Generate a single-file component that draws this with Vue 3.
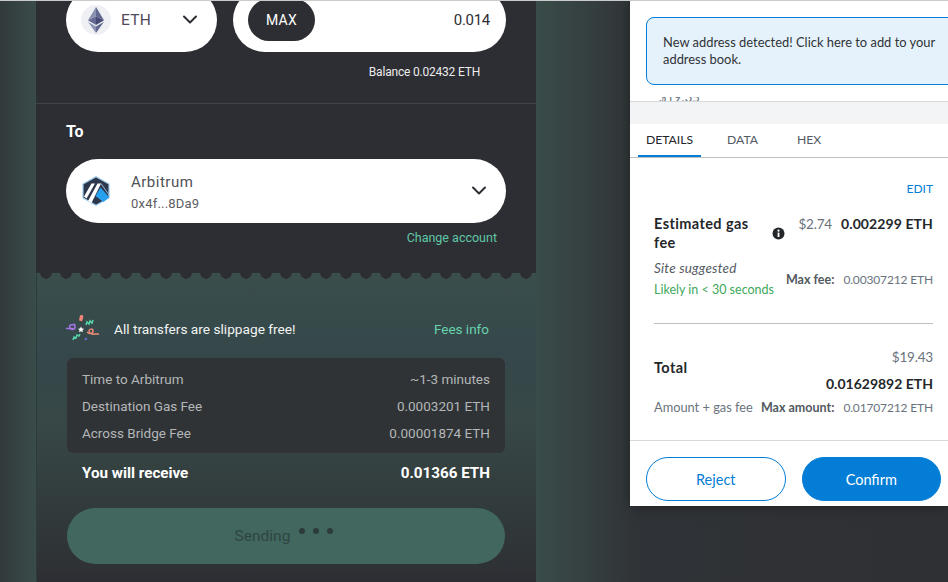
<template>
  <div class="page">
    <div class="card">
      <section class="from">
        <div class="pills">
          <div class="pill token">
            <span class="eth-badge">
              <svg width="16" height="26" viewBox="0 0 16 26">
                <path d="M8 0 L8 9.6 L0 13.2 Z" fill="#8a92b2" />
                <path d="M8 0 L16 13.2 L8 9.6 Z" fill="#62688f" />
                <path d="M0 13.2 L8 9.6 L8 18 Z" fill="#62688f" />
                <path d="M16 13.2 L8 18 L8 9.6 Z" fill="#454a75" />
                <path d="M0 14.8 L8 26 L8 19.6 Z" fill="#8a92b2" />
                <path d="M16 14.8 L8 19.6 L8 26 Z" fill="#62688f" />
              </svg>
            </span>
            <span class="token-name">ETH</span>
            <svg class="chevron" width="16" height="10" viewBox="0 0 16 10">
              <path d="M2 1.5 L8 7.5 L14 1.5" fill="none" stroke="#2d2e33" stroke-width="2" stroke-linecap="round" stroke-linejoin="round" />
            </svg>
          </div>
          <div class="pill amount">
            <button class="max">MAX</button>
            <span class="amount-value">0.014</span>
          </div>
        </div>
        <div class="balance">Balance 0.02432 ETH</div>
      </section>

      <section class="to">
        <h3>To</h3>
        <div class="pill account">
          <svg class="arb" width="28" height="30" viewBox="0 0 28 30">
            <path d="M14 .7 L27 8 L27 22 L14 29.3 L1 22 L1 8 Z" fill="#2d374b" stroke="#9dcced" stroke-width="1.2" />
            <path d="M18.5 11.5 L27 21 L21.5 26 L13.5 20 Z" fill="#28a0f0" />
            <path d="M19 7.5 L27 19" fill="none" stroke="#96bedc" stroke-width="1" />
            <path d="M2 20.5 L9.5 7.5 L13 7.5 L4.5 22.5 Z" fill="#fff" />
            <path d="M6 25 L15.5 7.5 L19 7.5 L9.5 27 Z" fill="#fff" />
          </svg>
          <div class="account-text">
            <div class="account-name">Arbitrum</div>
            <div class="account-addr">0x4f...8Da9</div>
          </div>
          <svg class="chevron" width="16" height="10" viewBox="0 0 16 10">
            <path d="M2 1.5 L8 7.5 L14 1.5" fill="none" stroke="#2d2e33" stroke-width="2" stroke-linecap="round" stroke-linejoin="round" />
          </svg>
        </div>
        <div class="change">Change account</div>
      </section>

      <section class="summary">
        <div class="banner">
          <svg width="36" height="30" viewBox="0 0 36 30">
            <rect x="14.5" y="1" width="3.5" height="6" rx="1" fill="#f0857a" transform="rotate(12 16 4)" />
            <path d="M21 11 l1-3 2 2 1-3 2 2 1-3" fill="none" stroke="#55d6a8" stroke-width="1.5" />
            <path d="M1 14.5 h7 M8 11 c-3-1-4 1-3 3 s5 2 5-1 -1-3-2-2" fill="none" stroke="#a675e8" stroke-width="1.6" />
            <path d="M16 12.5 l1 2 2 .3-1.5 1.4 .4 2.1-1.9-1-1.9 1 .4-2.1-1.5-1.4 2-.3 Z" fill="#fff" />
            <path d="M22 18 c2 2 6 2 6-1 s-4-2-4 0 3 4 6 3 h4" fill="none" stroke="#ee8a76" stroke-width="1.5" />
            <path d="M8 26 l1-3 2 1 1-3 2 1 1-2" fill="none" stroke="#55d6a8" stroke-width="1.5" />
            <path d="M19 26 l2-3 1.5 3 Z" fill="#6d62d8" />
          </svg>
          <span class="banner-text">All transfers are slippage free!</span>
          <span class="fees-link">Fees info</span>
        </div>

        <div class="fees">
          <div class="fee-row" v-for="fee in fees" :key="fee.label">
            <span>{{ fee.label }}</span>
            <span>{{ fee.value }}</span>
          </div>
        </div>

        <div class="receive">
          <span>You will receive</span>
          <span>0.01366 ETH</span>
        </div>

        <button class="sending">
          <span>Sending</span>
          <span class="dots"><i></i><i></i><i></i></span>
        </button>
      </section>
    </div>

    <aside class="popup">
      <div class="alert">New address detected! Click here to add to your address book.</div>
      <div class="peek"><span>$19.35</span></div>
      <div class="stripe"></div>
      <nav class="tabs">
        <span class="tab active">DETAILS</span>
        <span class="tab data">DATA</span>
        <span class="tab hex">HEX</span>
      </nav>

      <div class="details">
        <div class="edit">EDIT</div>
        <div class="gas-row">
          <div class="label">Estimated gas fee</div>
          <svg class="info" width="13" height="13" viewBox="0 0 13 13">
            <circle cx="6.5" cy="6.5" r="6" fill="#24272a" />
            <rect x="5.6" y="5.6" width="1.8" height="4.4" fill="#fff" />
            <circle cx="6.5" cy="3.7" r="1.1" fill="#fff" />
          </svg>
          <div class="gas-values">
            <span class="muted">$2.74</span>
            <strong>0.002299 ETH</strong>
          </div>
        </div>
        <div class="site-row">
          <div>
            <div class="site">Site suggested</div>
            <div class="likely">Likely in &lt; 30 seconds</div>
          </div>
          <div class="small">
            <b>Max fee:</b>
            <span>0.00307212 ETH</span>
          </div>
        </div>
        <hr />
        <div class="total-row">
          <div class="label total-label">Total</div>
          <div class="total-values">
            <div class="muted">$19.43</div>
            <strong>0.01629892 ETH</strong>
          </div>
        </div>
        <div class="amount-row">
          <span class="muted-sm">Amount + gas fee</span>
          <div class="small">
            <b>Max amount:</b>
            <span>0.01707212 ETH</span>
          </div>
        </div>
      </div>

      <footer class="actions">
        <button class="reject">Reject</button>
        <button class="confirm">Confirm</button>
      </footer>
    </aside>
  </div>
</template>

<script setup>
const fees = [
  { label: 'Time to Arbitrum', value: '~1-3 minutes' },
  { label: 'Destination Gas Fee', value: '0.0003201 ETH' },
  { label: 'Across Bridge Fee', value: '0.00001874 ETH' }
]
</script>

<style>
html,
body {
  margin: 0;
  background: #2d2e33;
}
</style>

<style scoped>
.page {
  position: relative;
  width: 948px;
  height: 582px;
  overflow: hidden;
  box-sizing: border-box;
  padding-left: 36px;
  font-family: "Roboto", "Liberation Sans", sans-serif;
  background: linear-gradient(90deg, #323a3b 0, #394c49 36px, #394c49 536px, #353f3f 590px, #2f3236 640px, #2e3034 100%);
}

.page::after {
  content: "";
  position: absolute;
  left: 0;
  right: 0;
  top: 0;
  height: 1px;
  background: #c9cbcc;
}

.card {
  display: flow-root;
  width: 500px;
  height: 582px;
  background: #2d2e33;
}

.from {
  height: 115px;
  margin-top: -12px;
  padding: 0 30px;
  border-bottom: 1px solid #3f4446;
}

.pills {
  display: flex;
  gap: 16px;
}

.pill {
  display: flex;
  align-items: center;
  height: 64px;
  background: #fff;
  border-radius: 32px;
  box-sizing: border-box;
  color: #2d2e33;
}

.token {
  width: 151px;
  padding: 0 19px 0 15px;
}

.eth-badge {
  display: flex;
  align-items: center;
  justify-content: center;
  width: 30px;
  height: 30px;
  border-radius: 50%;
  background: #eff0f4;
}

.token-name {
  margin-left: 10px;
  font-size: 15.5px;
  letter-spacing: 0.3px;
  color: #50495a;
}

.chevron {
  margin-left: auto;
}

.amount {
  flex: 1;
  padding: 0 16px 0 15px;
}

.max {
  width: 67px;
  height: 42px;
  border: none;
  border-radius: 21px;
  background: #2d2e33;
  color: #fff;
  font-family: inherit;
  font-size: 14px;
  letter-spacing: 0.3px;
}

.amount-value {
  margin-left: auto;
  font-size: 15px;
  letter-spacing: -0.3px;
  color: #2d2e33;
}

.balance {
  margin-top: 12px;
  padding-right: 26px;
  text-align: right;
  font-size: 12px;
  line-height: 16px;
  letter-spacing: -0.2px;
  color: #ececec;
}

.to {
  height: 169px;
  padding: 0 30px;
}

.to h3 {
  margin: 0;
  padding-top: 18px;
  font-size: 16px;
  line-height: 20px;
  font-weight: 700;
  color: #fff;
}

.account {
  margin-top: 17px;
  padding: 0 19px 0 16px;
}

.arb {
  flex: none;
}

.account-text {
  margin-left: 21px;
  padding-top: 3px;
}

.account-name {
  font-size: 15px;
  line-height: 22px;
  letter-spacing: 0.5px;
  color: #4f5056;
}

.account-addr {
  font-size: 13px;
  line-height: 22px;
  letter-spacing: 0.2px;
  color: #5c5d63;
}

.change {
  margin-top: 7px;
  padding-right: 9px;
  text-align: right;
  font-size: 12.5px;
  line-height: 16px;
  color: #5fc8a6;
}

.summary {
  position: relative;
  height: 309px;
  padding: 42px 31px 0;
  box-sizing: border-box;
  box-shadow: inset 1px 0 #2f3a3a;
  background: linear-gradient(180deg, #3a4e4c 0, #35474a 90px, #374846 150px, #2e3135 296px, #2d2e33 100%);
}

.summary::before {
  content: "";
  position: absolute;
  left: 0;
  right: 0;
  top: 0;
  height: 6px;
  background: radial-gradient(circle at 10px 0, #2d2e33 5.5px, transparent 6px) 0 0 / 20px 6px repeat-x;
}

.banner {
  display: flex;
  align-items: center;
  height: 28px;
  padding-right: 16px;
  margin-left: -2px;
}

.banner-text {
  margin-left: 13px;
  font-size: 13.7px;
  color: #f2f4f3;
}

.fees-link {
  margin-left: auto;
  font-size: 13.5px;
  color: #66d2ae;
}

.fees {
  margin-top: 15px;
  padding: 8px 15px 6px;
  border-radius: 6px;
  background: #2f3336;
}

.fee-row {
  display: flex;
  justify-content: space-between;
  height: 27px;
  line-height: 27px;
  font-size: 13.5px;
  color: #b4b7b8;
}

.receive {
  display: flex;
  justify-content: space-between;
  margin-top: 10px;
  padding: 0 15px;
  font-size: 15.2px;
  line-height: 20px;
  font-weight: 700;
  color: #fff;
}

.sending {
  display: flex;
  align-items: center;
  justify-content: center;
  gap: 9px;
  width: 100%;
  height: 56px;
  margin-top: 25px;
  padding: 0 4px 0 0;
  border: none;
  border-radius: 28px;
  background: #41675e;
  color: #2f4543;
  font-family: inherit;
  font-size: 15.5px;
}

.dots {
  display: flex;
  gap: 8px;
  margin-bottom: 10px;
}

.dots i {
  width: 6px;
  height: 6px;
  border-radius: 50%;
  background: #2c3c3b;
}

.popup {
  position: absolute;
  top: 1px;
  right: 0;
  width: 318px;
  height: 505px;
  display: flex;
  flex-direction: column;
  overflow: hidden;
  background: #fff;
  box-shadow: 0 0 12px rgba(0, 0, 0, 0.35);
  font-family: "Lato", "Liberation Sans", sans-serif;
  color: #24272a;
}

.alert {
  flex: none;
  box-sizing: border-box;
  width: 330px;
  height: 68px;
  margin: 16px 0 0 16px;
  padding: 16px 30px 0 16px;
  border: 1px solid #037dd6;
  border-radius: 8px;
  background: #e6f2fb;
  font-size: 12.9px;
  line-height: 17px;
  color: #2f3337;
}

.peek {
  flex: none;
  height: 4px;
  margin-top: 12px;
  padding-left: 29px;
  overflow: hidden;
  font-size: 13px;
  line-height: 16px;
  color: #6a737d;
}

.peek span {
  display: block;
  margin-top: -8px;
}

.stripe {
  flex: none;
  height: 22px;
  border-top: 1px solid #d6d9dc;
  background: #f2f4f6;
}

.tabs {
  flex: none;
  display: flex;
  box-sizing: border-box;
  height: 34px;
  padding-left: 8px;
  border-bottom: 1px solid #bbc0c5;
}

.tab {
  box-sizing: border-box;
  height: 33px;
  line-height: 31px;
  font-size: 12.2px;
  color: #535a61;
}

.tab.active {
  width: 63px;
  text-align: center;
  color: #24272a;
  border-bottom: 2px solid #037dd6;
}

.tab.data {
  margin-left: 26px;
}

.tab.hex {
  margin-left: 39px;
}

.details {
  flex: 1;
  padding: 0 15px 0 24px;
}

.edit {
  margin-top: 23px;
  text-align: right;
  font-size: 12px;
  line-height: 16px;
  color: #037dd6;
}

.gas-row {
  display: flex;
  align-items: center;
  margin-top: 17px;
}

.label {
  font-size: 14.5px;
  line-height: 19px;
  font-weight: 700;
  letter-spacing: 0.4px;
}

.gas-row .label {
  box-sizing: border-box;
  width: 118px;
  padding-right: 15px;
}

.info {
  flex: none;
}

.gas-values {
  align-self: flex-start;
  margin-left: auto;
  font-size: 14px;
  line-height: 19px;
  white-space: nowrap;
}

.gas-values strong {
  margin-left: 9px;
  letter-spacing: 0.1px;
}

.muted {
  font-size: 13.5px;
  letter-spacing: -0.2px;
  color: #6a737d;
}

.site-row {
  display: flex;
  justify-content: space-between;
  align-items: center;
  margin-top: 6px;
}

.site {
  font-size: 13.5px;
  line-height: 21px;
  font-style: italic;
  letter-spacing: 0.2px;
  color: #535a61;
}

.likely {
  font-size: 12.5px;
  line-height: 21px;
  color: #3fa85c;
}

.small {
  display: flex;
  align-items: baseline;
  gap: 9px;
  font-size: 12px;
  letter-spacing: -0.15px;
  color: #6a737d;
  white-space: nowrap;
}

.small b {
  font-size: 12.5px;
  letter-spacing: 0;
  color: #535a61;
}

hr {
  height: 1px;
  margin: 23px 0 0;
  border: none;
  background: #bbc0c5;
}

.total-row {
  display: flex;
  justify-content: space-between;
  margin-top: 23px;
}

.total-label {
  padding-top: 11px;
}

.total-values {
  text-align: right;
  font-size: 14px;
  line-height: 20px;
}

.total-values strong {
  display: block;
  margin-top: 7px;
}

.amount-row {
  display: flex;
  justify-content: space-between;
  align-items: baseline;
  margin-top: 5px;
  line-height: 16px;
}

.muted-sm {
  font-size: 12.8px;
  color: #6a737d;
}

.actions {
  flex: none;
  display: flex;
  gap: 16px;
  height: 66px;
  box-sizing: border-box;
  padding: 16px 7px 5px 16px;
  border-top: 1px solid #d6d9dc;
}

.actions button {
  flex: 1;
  border-radius: 22px;
  font-family: inherit;
  font-size: 14.5px;
}

.reject {
  border: 1px solid #037dd6;
  background: #fff;
  color: #037dd6;
}

.confirm {
  border: 1px solid #037dd6;
  background: #037dd6;
  color: #fff;
}
</style>
